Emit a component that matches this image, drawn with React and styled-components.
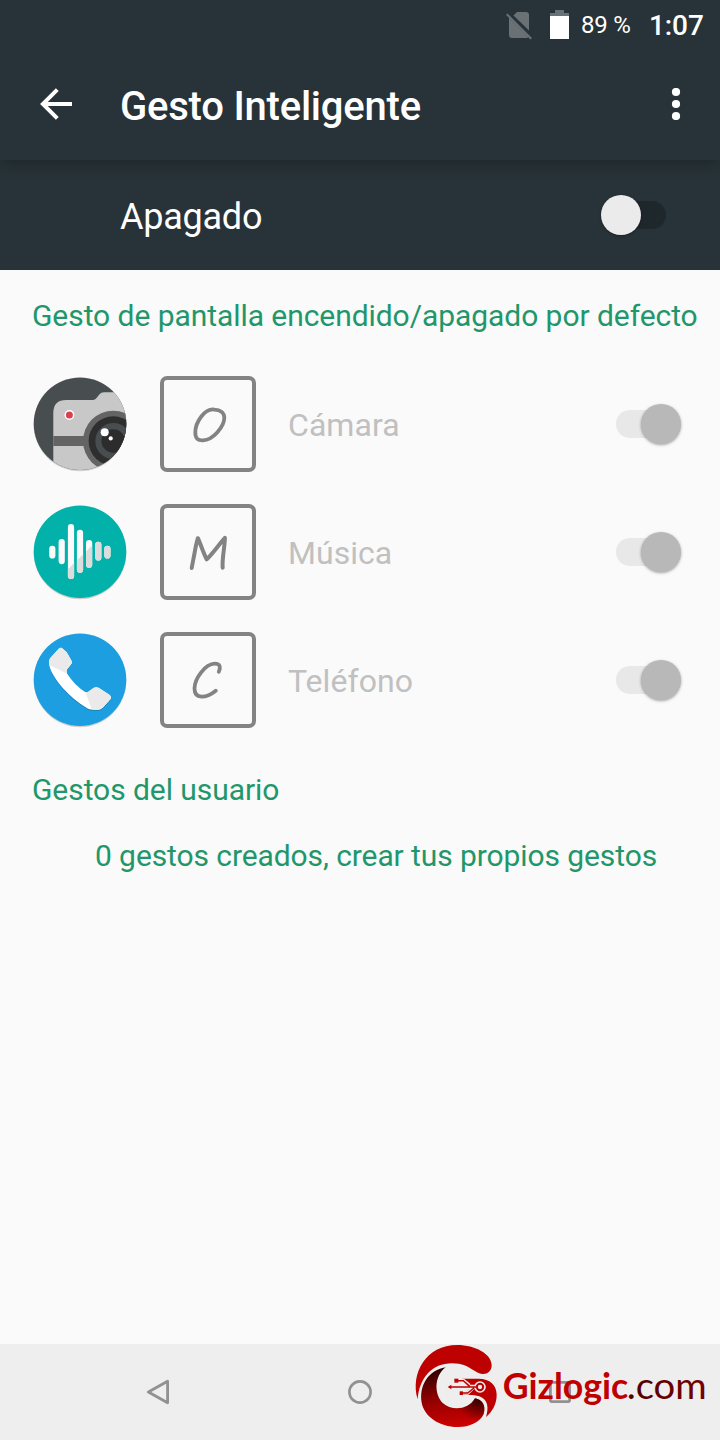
import React from 'react';
import styled, { createGlobalStyle } from 'styled-components';

const GlobalStyle = createGlobalStyle`
  * { box-sizing: border-box; }
  body { margin: 0; background: #fafafa; font-family: Roboto, sans-serif; }
  svg { display: block; flex: none; }
`;

const Screen = styled.div`
  position: relative;
  width: 720px;
  height: 1440px;
  display: flex;
  flex-direction: column;
  overflow: hidden;
  background: #fafafa;
`;

const StatusBar = styled.div`
  position: relative;
  z-index: 2;
  height: 48px;
  display: flex;
  align-items: center;
  justify-content: flex-end;
  padding: 2px 16px 0 0;
  background: #283339;
  color: #fff;
`;

const BatteryIcon = styled.svg`
  margin: -2px 12px 0 17px;
`;

const SimIcon = styled.svg`
  margin-top: 0;
`;

const BatteryLevel = styled.span`
  width: 68px;
  font-size: 24px;
  letter-spacing: -0.2px;
  white-space: nowrap;
`;

const Clock = styled.span`
  font-size: 28px;
  font-weight: 500;
  width: 55px;
  letter-spacing: -0.1px;
  white-space: nowrap;
`;

const AppBar = styled.header`
  position: relative;
  z-index: 1;
  height: 112px;
  display: flex;
  align-items: center;
  padding: 0 38px 0 40px;
  background: #283339;
  color: #fff;
  box-shadow: 0 4px 16px rgba(0, 0, 0, 0.28);
`;

const Title = styled.h1`
  flex: 1;
  margin: 5px 0 0 48px;
  font-size: 40px;
  line-height: 48px;
  font-weight: 500;
  letter-spacing: -0.22px;
`;

const MasterRow = styled.div`
  height: 110px;
  display: flex;
  align-items: center;
  justify-content: space-between;
  padding: 0 54px 0 120px;
  background: #283339;
  color: #fff;
`;

const MasterLabel = styled.span`
  margin-top: 4px;
  font-size: 36px;
  letter-spacing: -0.25px;
`;

const Track = styled.span`
  display: flex;
  align-items: center;
  justify-content: ${(p) => (p.$on ? 'flex-end' : 'flex-start')};
  width: 58px;
  height: 28px;
  border-radius: 14px;
  background: ${(p) => (p.$dark ? '#1e272c' : '#e8e8e8')};
`;

const Thumb = styled.span`
  flex: none;
  width: 40px;
  height: 40px;
  margin: 0 ${(p) => (p.$on ? -7 : 0)}px 0 ${(p) => (p.$on ? 0 : -7)}px;
  border-radius: 50%;
  background: ${(p) => (p.$on ? '#b8b8b8' : '#ebebeb')};
  box-shadow: 0 1px 3px rgba(0, 0, 0, 0.35);
`;

const Content = styled.main`
  flex: 1;
  display: flex;
  flex-direction: column;
`;

const SectionTitle = styled.h2`
  margin: 0;
  padding: ${(p) => p.$top}px 0 0 32px;
  font-size: 30px;
  line-height: 36px;
  font-weight: 400;
  letter-spacing: -0.06px;
  color: #1f976b;
  white-space: nowrap;
`;

const List = styled.div`
  padding-top: 26px;
`;

const Row = styled.div`
  height: 128px;
  display: flex;
  align-items: center;
  padding: 0 46px 0 32px;
`;

const GestureBox = styled.div`
  width: 96px;
  height: 96px;
  margin: 0 32px;
  border: 4px solid #838383;
  border-radius: 7px;
`;

const GestureDrawing = styled.svg`
  margin: -4px;
  fill: none;
  stroke: #838383;
  stroke-linecap: round;
  stroke-linejoin: round;
`;

const RowLabel = styled.span`
  flex: 1;
  margin-top: 2px;
  font-size: 32px;
  letter-spacing: 0.05px;
  color: #c0c0c0;
`;

const CreateLink = styled.div`
  padding: 30px 0 0 95px;
  font-size: 30px;
  line-height: 36px;
  letter-spacing: -0.09px;
  color: #1f976b;
  white-space: nowrap;
`;

const NavBar = styled.nav`
  height: 96px;
  display: flex;
  align-items: center;
  justify-content: space-around;
  padding: 0 61px 0 59px;
  background: #eeeeee;
`;

const Watermark = styled.svg`
  position: absolute;
  left: 400px;
  top: 1335px;
`;

const Disc = ({ color }) => (
  <>
    <circle cx="48" cy="48.9" r="46.3" fill="#000" opacity="0.16" />
    <circle cx="48" cy="47.7" r="46.3" fill={color} />
  </>
);

const CameraIcon = () => (
  <svg width="96" height="96" viewBox="0 0 96 96">
    <clipPath id="disc"><circle cx="48" cy="47.7" r="46.3" /></clipPath>
    <Disc color="#484d50" />
    <g clipPath="url(#disc)">
      <path d="M21.3 96V37Q21.3 24 34.3 24H61Q63 24 64.5 22L67.5 18.3Q69 16.3 72 16.3H96V96Z" fill="#c8c8c8" />
      <path d="M21.3 60H60V70H21.3Z" fill="#646464" />
      <circle cx="81.3" cy="65" r="30.3" fill="#646464" />
      <circle cx="81.3" cy="65" r="24.7" fill="#2e2e2e" />
      <circle cx="81.3" cy="65" r="18" fill="#484d50" />
      <circle cx="81.3" cy="65" r="11.8" fill="#2c2c2c" />
      <circle cx="72.7" cy="56.3" r="4" fill="#fff" />
      <circle cx="78.7" cy="62.4" r="2.1" fill="#fff" />
      <circle cx="37.4" cy="39" r="4.9" fill="#fff" />
      <circle cx="37.4" cy="39" r="3.5" fill="#d9404f" />
    </g>
  </svg>
);

const BARS = [
  [20.3, 41.7, 54.5], [29.7, 35, 60.2], [39, 20, 75], [48, 25.7, 68.8],
  [57.1, 36, 63.8], [66.3, 37.7, 56.5], [75.4, 41.7, 54.5],
];

const Bars = ({ color }) =>
  BARS.map(([x, a, b]) => (
    <rect key={x} x={x - 3.1} y={a} width="6.2" height={b - a} rx="3.1" fill={color} />
  ));

const MusicIcon = () => (
  <svg width="96" height="96" viewBox="0 0 96 96">
    <clipPath id="shade"><path d="M28 73L76 26H96V96H28Z" /></clipPath>
    <Disc color="#02b2aa" />
    <Bars color="#fafafa" />
    <g clipPath="url(#shade)"><Bars color="#dcdcdc" /></g>
  </svg>
);

const PhoneIcon = () => {
  const handset = 'M26.8 16.8Q29 14.8 31 17Q34.5 19.5 36 22.5L39.4 28.5Q40.5 30.5 39 32.5L35 37.5V41.5C40 49 46 55.5 53 60H56L61.5 55.9Q64.3 54.5 67 55.9L77.7 63Q80 65.3 78.2 67.6L71 75.5Q68.5 77.7 66 77.8H62C58 77.8 56 76.8 54 75.5C38 66 22 48 17.8 35.5Q17 33 17.1 29.5Q17.1 27.3 18.5 25.7Z';
  return (
    <svg width="96" height="96" viewBox="0 0 96 96">
      <clipPath id="handset"><path d={handset} /></clipPath>
      <Disc color="#1d9ee1" />
      <path d={handset} fill="#000" opacity="0.2" transform="translate(0 1)" />
      <path d={handset} fill="#fff" />
      <g clipPath="url(#handset)" fill="#eaeaea">
        <path d="M10 10H45V44L35 41.5L17 33H10Z" />
        <path d="M53 59L60 78V85H85V50H60Z" />
      </g>
    </svg>
  );
};

const ITEMS = [
  {
    label: 'Cámara', Icon: CameraIcon, width: 3.8,
    stroke: 'M54.5 33.6C45 32 35.3 46 35.3 56.5C35.3 62.5 38 64.6 43 64.3C53 64 64.4 50.5 64.3 41.5C64.2 36.5 60 33.9 54.5 33.6Z',
  },
  {
    label: 'Música', Icon: MusicIcon, width: 4,
    stroke: 'M31.7 64L33.5 54.5C34.8 48 36 40 37.9 34.2C41 41 43.2 48.5 46.7 55.3C53.3 49 58.5 41 64.9 33.8C64.8 43 61.8 55 62.7 63.7',
  },
  {
    label: 'Teléfono', Icon: PhoneIcon, width: 3.8,
    stroke: 'M58.8 39.8C60.8 35.5 60.4 31.7 54.8 31.7C45 31.9 34.5 47 34.5 56.5C34.5 67.5 46 66.5 55.8 58.7',
  },
];

const Switch = ({ on, dark }) => (
  <Track $on={on} $dark={dark}><Thumb $on={on} /></Track>
);

const BrandMark = () => (
  <Watermark width="320" height="105" viewBox="0 0 960 315">
    <defs>
      <linearGradient id="bowl" x1="0.3" y1="0" x2="0.45" y2="1">
        <stop offset="0" stopColor="#2a0000" />
        <stop offset="0.5" stopColor="#900000" />
        <stop offset="1" stopColor="#cc0000" />
      </linearGradient>
      <linearGradient id="com" x1="0" y1="0" x2="1" y2="0">
        <stop offset="0" stopColor="#500000" />
        <stop offset="1" stopColor="#780000" />
      </linearGradient>
      <radialGradient id="fold" gradientUnits="userSpaceOnUse" cx="238" cy="190" r="68">
        <stop offset="0" stopColor="#300000" />
        <stop offset="1" stopColor="#300000" stopOpacity="0" />
      </radialGradient>
    </defs>
    <path d="M53 193C30 115 78 30 172 30C225 30 275 57 275 91C275 109 262 118 247 117C227 115 210 92 177 86C105 75 58 121 53 193Z" fill="#bd0000" />
    <path d="M137 97C101 125 103 178 128 204C155 229 206 225 225 190C246 194 259 211 251 237C240 262 209 276 174 276C116 276 72 242 65 203C57 154 83 106 137 97Z" fill="url(#bowl)" />
    <path d="M225 190C246 194 259 211 251 237C240 262 209 276 174 276L150 220C180 224 211 216 225 190Z" fill="url(#fold)" />
    <path d="M186 131H236C270 131 290 151 290 179C290 207 278 228 258 246C267 218 264 194 238 184C222 178 205 180 188 180L215 156L202 140Z" fill="#bd0000" />
    <g fill="none" stroke="#eee" strokeWidth="11">
      <path d="M176 155H238M176 137H190L208 151M184 174H203L219 158" />
      <circle cx="240" cy="156" r="12" />
    </g>
    <g fill="none" stroke="#bd0000" strokeWidth="4.5">
      <path d="M150 156H228M169 137H190L209 154M187 174H203L222 159" />
      <circle cx="240" cy="156" r="9.5" fill="#eee" strokeWidth="6" />
    </g>
    <g fill="#bd0000">
      <path d="M143 156L154 149V163Z" />
      <rect x="163" y="131" width="12" height="12" />
      <rect x="179" y="169" width="10" height="11" />
    </g>
    <text x="308" y="191" fontFamily="Lato, sans-serif" fontWeight="700" fontSize="108" textLength="377" lengthAdjust="spacingAndGlyphs" fill="#c00000">Gizlogic</text>
    <text x="680" y="191" fontFamily="Lato, sans-serif" fontWeight="400" fontSize="108" textLength="240" lengthAdjust="spacingAndGlyphs" fill="url(#com)">.com</text>
  </Watermark>
);

export default function App() {
  return (
    <Screen>
      <GlobalStyle />
      <StatusBar>
        <SimIcon width="27" height="29" viewBox="0 0 27 29" fill="#697175">
          <path d="M7.5 4.5L11 1H20Q23 1 23 4V19.5Z" />
          <path d="M3 6.5L22.5 26Q22 27 20 27H6Q3 27 3 24Z" />
          <path d="M.8 3.2L25.2 27.8" stroke="#697175" strokeWidth="2" />
        </SimIcon>
        <BatteryIcon width="19" height="29" viewBox="0 0 19 29">
          <path d="M0 6V3H5V0H14V3H19V6Z" fill="#697175" />
          <path d="M0 6H19V29H0Z" fill="#fff" />
        </BatteryIcon>
        <BatteryLevel>89 %</BatteryLevel>
        <Clock>1:07</Clock>
      </StatusBar>
      <AppBar>
        <svg width="32" height="32" viewBox="0 0 32 32" fill="none" stroke="#fff" strokeWidth="4">
          <path d="M32 16H3M17.3 1.6L2.9 16L17.3 30.4" />
        </svg>
        <Title>Gesto Inteligente</Title>
        <svg width="12" height="32" viewBox="0 0 12 32" fill="#fff">
          <circle cx="6" cy="4" r="4.1" />
          <circle cx="6" cy="16" r="4.1" />
          <circle cx="6" cy="28" r="4.1" />
        </svg>
      </AppBar>
      <MasterRow>
        <MasterLabel>Apagado</MasterLabel>
        <Switch dark />
      </MasterRow>
      <Content>
        <SectionTitle $top={28}>Gesto de pantalla encendido/apagado por defecto</SectionTitle>
        <List>
          {ITEMS.map(({ label, Icon, stroke, width }) => (
            <Row key={label}>
              <Icon />
              <GestureBox>
                <GestureDrawing width="96" height="96" viewBox="0 0 96 96" strokeWidth={width}>
                  <path d={stroke} />
                </GestureDrawing>
              </GestureBox>
              <RowLabel>{label}</RowLabel>
              <Switch on />
            </Row>
          ))}
        </List>
        <SectionTitle $top={28}>Gestos del usuario</SectionTitle>
        <CreateLink>0 gestos creados, crear tus propios gestos</CreateLink>
      </Content>
      <NavBar>
        <svg width="24" height="26" viewBox="0 0 24 26" fill="none" stroke="#919191" strokeWidth="2.8" strokeLinejoin="round">
          <path d="M20.6 2.2V23.8L1.4 13Z" />
        </svg>
        <svg width="24" height="24" viewBox="0 0 24 24" fill="none" stroke="#919191" strokeWidth="2.6">
          <circle cx="12" cy="12" r="10.6" />
        </svg>
        <svg width="22" height="22" viewBox="0 0 22 22" fill="none" stroke="#919191" strokeWidth="2.8">
          <rect x="1.4" y="1.4" width="19.2" height="19.2" rx="1" />
        </svg>
      </NavBar>
      <BrandMark />
    </Screen>
  );
}
